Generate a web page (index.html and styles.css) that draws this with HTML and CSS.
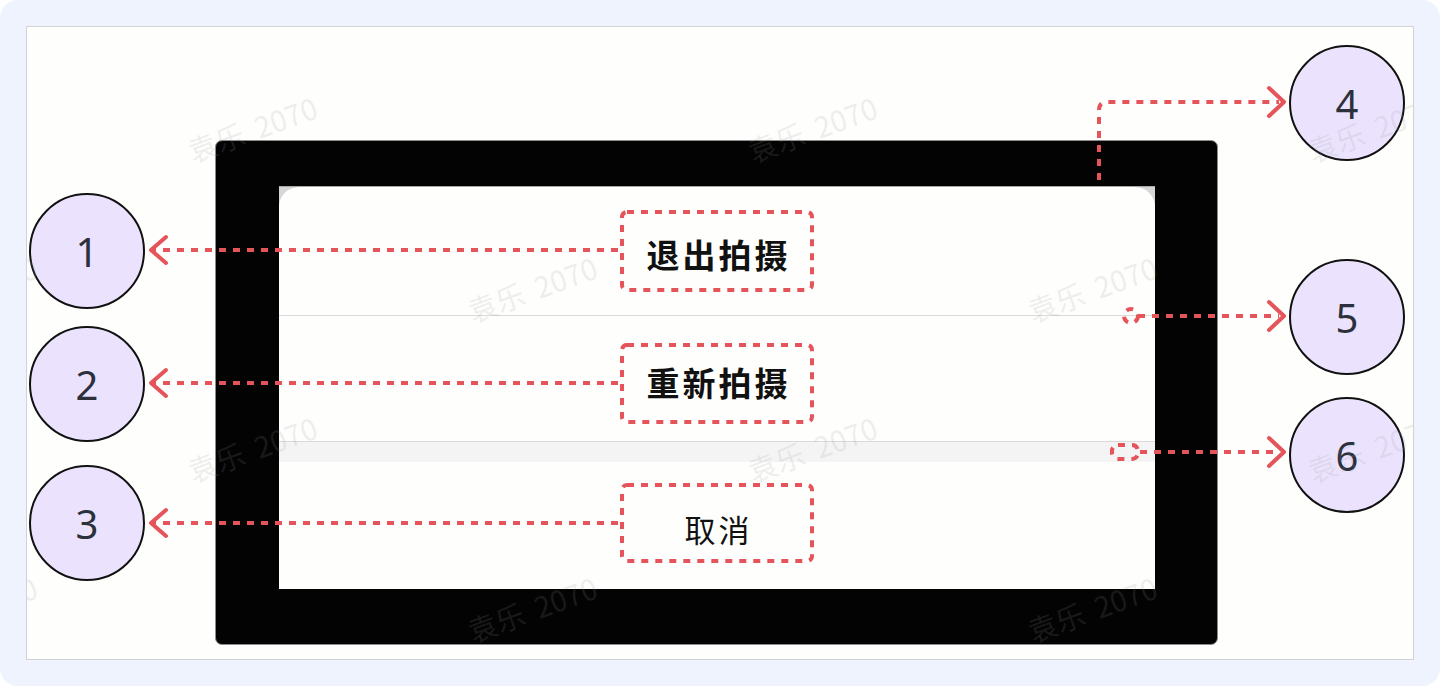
FILE: index.html
```html
<!DOCTYPE html>
<html lang="zh-CN">
<head>
  <meta charset="UTF-8" />
  <title>拍摄操作菜单</title>
  <link rel="stylesheet" href="styles.css">
</head>
<body>
  <div class="page">
    <div class="canvas">
      <div class="phone">
        <div class="screen">
          <div class="sheet">
            <div class="item first">退出拍摄</div>
            <div class="item">重新拍摄</div>
            <div class="gap"></div>
            <div class="item cancel">取消</div>
          </div>
        </div>
      </div>

      <svg class="marks" width="1386" height="632" viewBox="0 0 1386 632">
        <g fill="none" stroke="#e5545b" stroke-width="4" stroke-dasharray="7 7">
          <rect x="595" y="185" width="190" height="78" rx="5" />
          <rect x="595" y="318" width="190" height="77" rx="5" />
          <rect x="595" y="458" width="190" height="76" rx="5" />
          <path d="M591 223 H127" />
          <path d="M591 356 H127" />
          <path d="M591 496 H127" />
          <path d="M1072 153 V83 Q1072 75 1080 75 H1252" />
          <circle cx="1104" cy="289" r="7" />
          <path d="M1111 289 H1252" />
          <rect x="1085" y="418" width="26" height="14" rx="6" />
          <path d="M1113 425 H1252" />
        </g>
        <g fill="none" stroke="#e5545b" stroke-width="4" stroke-linecap="round" stroke-linejoin="round">
          <path d="M139 210 L124 223 L139 236" />
          <path d="M139 343 L124 356 L139 369" />
          <path d="M139 483 L124 496 L139 509" />
          <path d="M1242 61 L1257 75 L1242 89" />
          <path d="M1242 275 L1257 289 L1242 303" />
          <path d="M1242 411 L1257 425 L1242 439" />
        </g>
      </svg>

      <div class="badge b1">1</div>
      <div class="badge b2">2</div>
      <div class="badge b3">3</div>
      <div class="badge b4">4</div>
      <div class="badge b5">5</div>
      <div class="badge b6">6</div>

      <div class="watermarks">
        <span style="left:225px;top:101px">袁乐 2070</span>
        <span style="left:785px;top:101px">袁乐 2070</span>
        <span style="left:1345px;top:101px">袁乐 2070</span>
        <span style="left:-55px;top:261px">袁乐 2070</span>
        <span style="left:505px;top:261px">袁乐 2070</span>
        <span style="left:1065px;top:261px">袁乐 2070</span>
        <span style="left:225px;top:421px">袁乐 2070</span>
        <span style="left:785px;top:421px">袁乐 2070</span>
        <span style="left:1345px;top:421px">袁乐 2070</span>
        <span style="left:-55px;top:581px">袁乐 2070</span>
        <span style="left:505px;top:581px">袁乐 2070</span>
        <span style="left:1065px;top:581px">袁乐 2070</span>
      </div>
    </div>
  </div>
</body>
</html>
```

FILE: styles.css
```css
body {
  margin: 0;
  background: #ffffff;
  font-family: "Noto Sans", "Noto Sans CJK SC", sans-serif;
}

.page {
  width: 1440px;
  height: 686px;
  box-sizing: border-box;
  padding: 26px;
  background: #eff3fd;
  border-radius: 18px;
}

.canvas {
  position: relative;
  height: 634px;
  box-sizing: border-box;
  border: 1px solid #d2d2d6;
  background: #fefefc;
  overflow: hidden;
}

/* phone mock */
.phone {
  display: flex;
  width: 1003px;
  height: 505px;
  box-sizing: border-box;
  margin: 113px 0 0 188px;
  padding: 45px 62px 55px 63px;
  background: #030303;
  border: 1px solid #8c8c8c;
  border-radius: 7px;
}

.screen {
  flex: 1;
  display: flex;
  background: #d6d6d6;
  border-top: 1px solid #a8a8a8;
}

.sheet {
  flex: 1;
  display: flex;
  flex-direction: column;
  background: #fefefd;
  border-radius: 20px 20px 0 0;
  overflow: hidden;
}

.item {
  display: flex;
  align-items: center;
  justify-content: center;
  height: 126px;
  padding: 6px 0 0 3px;
  box-sizing: border-box;
  font-family: "Noto Sans CJK SC", sans-serif;
  font-size: 33px;
  font-weight: bold;
  letter-spacing: 3px;
  color: #111;
  border-bottom: 1px solid #dadada;
}

.item.first { height: 129px; }

.item.cancel {
  flex: 1;
  font-weight: normal;
  font-size: 31px;
  letter-spacing: 3px;
  border-bottom: none;
}

.gap {
  height: 20px;
  background: #f4f4f4;
}

/* annotations */
.marks {
  position: absolute;
  left: 0;
  top: 0;
}

.badge {
  position: absolute;
  width: 116px;
  height: 116px;
  box-sizing: border-box;
  border: 2px solid #111;
  border-radius: 50%;
  background: #ebe3fd;
  display: flex;
  align-items: center;
  justify-content: center;
  font-size: 40px;
  color: #2b303b;
}

.b1 { left: 2px; top: 166px; }
.b2 { left: 2px; top: 299px; }
.b3 { left: 2px; top: 438px; }
.b4 { left: 1262px; top: 18px; }
.b5 { left: 1262px; top: 232px; }
.b6 { left: 1262px; top: 370px; }

.watermarks {
  position: absolute;
  inset: 0;
  pointer-events: none;
}

.watermarks span {
  position: absolute;
  transform: translate(-50%, -50%) rotate(-20deg);
  white-space: nowrap;
  font-family: "Noto Sans CJK SC", sans-serif;
  font-size: 29px;
  word-spacing: 6px;
  color: rgba(150, 150, 150, 0.16);
}
```
